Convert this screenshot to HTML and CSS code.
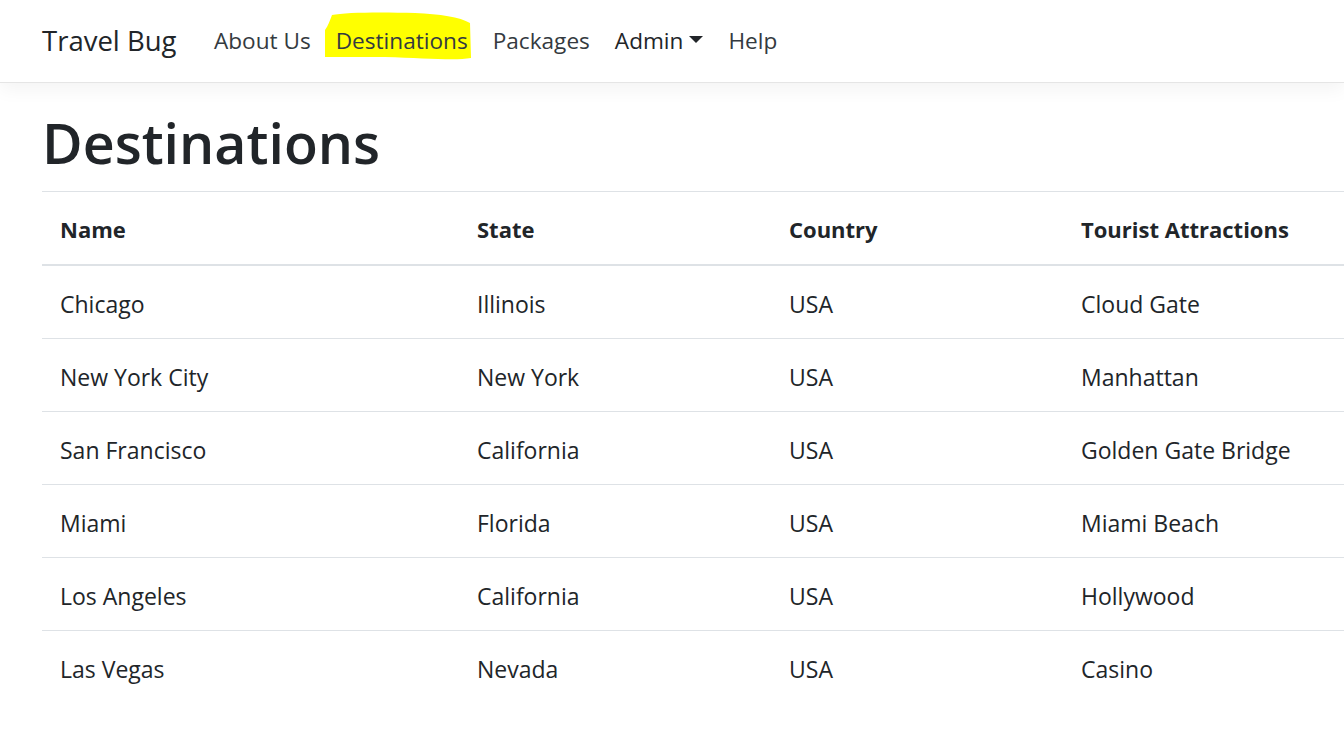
FILE: index.html
```html
<!DOCTYPE html>
<html lang="en">
<head>
<meta charset="utf-8">
<title>Destinations - Travel Bug</title>
<link rel="stylesheet" href="styles.css">
</head>
<body>
<header class="navbar">
  <a class="brand" href="#">Travel Bug</a>
  <nav class="nav">
    <a class="nav-link" href="#">About Us</a>
    <a class="nav-link active" href="#"><svg class="marker" width="147" height="50" viewBox="0 0 147 50" aria-hidden="true"><path d="M7,3 C20,0 60,0 90,1 C115,2 135,5 145,11 L146,46 C130,49 100,46 60,45 L0,45 L0,18 C3,14 5,8 7,3 Z" fill="#ffff00"/></svg><span class="label">Destinations</span></a>
    <a class="nav-link" href="#">Packages</a>
    <a class="nav-link dropdown" href="#">Admin<span class="caret"></span></a>
    <a class="nav-link" href="#">Help</a>
  </nav>
</header>
<main class="container">
  <h1 class="title">Destinations</h1>
  <table class="table">
    <colgroup>
      <col class="c1"><col class="c2"><col class="c3"><col class="c4">
    </colgroup>
    <thead>
      <tr><th>Name</th><th>State</th><th>Country</th><th>Tourist Attractions</th></tr>
    </thead>
    <tbody>
      <tr><td>Chicago</td><td>Illinois</td><td>USA</td><td>Cloud Gate</td></tr>
      <tr><td>New York City</td><td>New York</td><td>USA</td><td>Manhattan</td></tr>
      <tr><td>San Francisco</td><td>California</td><td>USA</td><td>Golden Gate Bridge</td></tr>
      <tr><td>Miami</td><td>Florida</td><td>USA</td><td>Miami Beach</td></tr>
      <tr><td>Los Angeles</td><td>California</td><td>USA</td><td>Hollywood</td></tr>
      <tr><td>Las Vegas</td><td>Nevada</td><td>USA</td><td>Casino</td></tr>
    </tbody>
  </table>
</main>
</body>
</html>
```
FILE: styles.css
```css
html, body {
  margin: 0;
  padding: 0;
  background: #fff;
  overflow: hidden;
}
body {
  font-family: "Open Sans", "Noto Sans", sans-serif;
  font-size: 23px;
  color: #212529;
  width: 1344px;
  height: 748px;
}
a { text-decoration: none; }

.navbar {
  height: 82px;
  border-bottom: 1px solid #e5e5e5;
  box-shadow: 0 6px 18px rgba(0, 0, 0, 0.05);
  display: flex;
  align-items: center;
  padding: 0 42px;
  box-sizing: content-box;
  margin-bottom: 24px;
}
.brand {
  font-size: 27.5px;
  color: #212529;
  margin-right: 25px;
  line-height: 1;
  padding-bottom: 1px;
}
.nav {
  display: flex;
  align-items: center;
  height: 82px;
}
.nav-link {
  position: relative;
  display: flex;
  align-items: center;
  height: 80px;
  padding: 0 12.5px 2px;
  color: #343a40;
  font-size: 22.6px;
}
.nav-link.dropdown { color: #212529; }
.marker {
  position: absolute;
  left: 2px;
  top: 12px;
}
.label { position: relative; }
.caret {
  display: inline-block;
  width: 0;
  height: 0;
  margin-left: 6px;
  margin-top: -2px;
  border-top: 7px solid #212529;
  border-left: 7px solid transparent;
  border-right: 7px solid transparent;
}

.container {
  padding: 0 0 0 42px;
}
.title {
  margin: 0 0 12px;
  font-size: 55.5px;
  font-weight: 600;
  line-height: 72px;
  color: #212529;
}
.table {
  border-collapse: collapse;
  width: 1420px;
  table-layout: fixed;
}
.c1 { width: 417px; }
.c2 { width: 312px; }
.c3 { width: 292px; }
.c4 { width: 399px; }
.table th, .table td {
  text-align: left;
  padding: 20px 18px 16px;
  line-height: 36px;
  border-top: 1px solid #dee2e6;
  vertical-align: top;
  white-space: nowrap;
}
.table th {
  font-weight: 700;
  font-size: 22px;
  padding: 19px 18px 17px;
  border-bottom: 2px solid #dee2e6;
}
.table td { font-weight: 400; }
.table tbody tr:first-child td { border-top: 0; }
```
